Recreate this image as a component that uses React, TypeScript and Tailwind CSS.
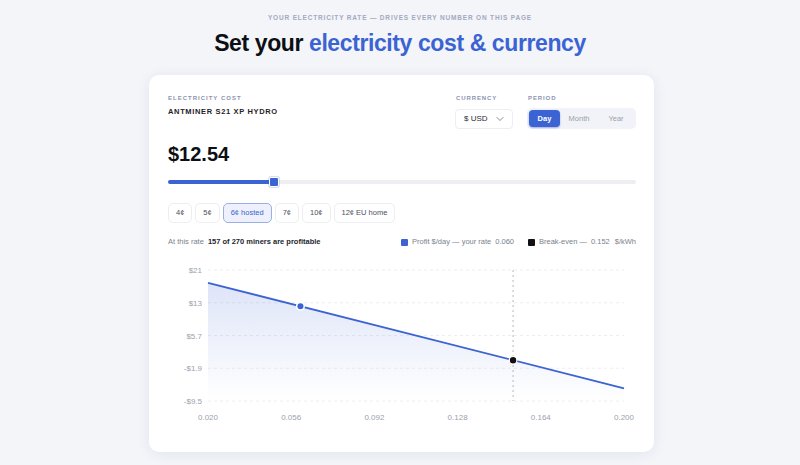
import { ChevronDown } from "lucide-react";

const BLUE = "#3b63d3";

// profit model: 0 at break-even, linear in the rate
const BREAK_EVEN = 0.152;
const SLOPE = 136.4;
const RATE = 0.06;

const X0 = 40;
const X1 = 456;
const R0 = 0.02;
const R1 = 0.2;
const Y_TOP = 12;
const Y_BOT = 143;
const V_TOP = 21;
const V_BOT = -9.5;

const xOf = (r: number) => X0 + ((r - R0) / (R1 - R0)) * (X1 - X0);
const profit = (r: number) => SLOPE * (BREAK_EVEN - r);
const yOf = (v: number) => Y_TOP + ((V_TOP - v) / (V_TOP - V_BOT)) * (Y_BOT - Y_TOP);

const Y_TICKS = ["$21", "$13", "$5.7", "-$1.9", "-$9.5"];
const X_TICKS = ["0.020", "0.056", "0.092", "0.128", "0.164", "0.200"];

const CHIPS = [
  { label: "4¢", active: false },
  { label: "5¢", active: false },
  { label: "6¢ hosted", active: true },
  { label: "7¢", active: false },
  { label: "10¢", active: false },
  { label: "12¢ EU home", active: false },
];

function ProfitChart() {
  const ax = xOf(R0);
  const ay = yOf(profit(R0));
  const bx = xOf(R1);
  const by = yOf(profit(R1));
  const beX = xOf(BREAK_EVEN);
  const beY = yOf(0);
  const curX = xOf(RATE);
  const curY = yOf(profit(RATE));

  return (
    <svg width={468} height={166} viewBox="0 0 468 166" className="block">
      <defs>
        <linearGradient id="area" x1="0" y1="0" x2="0" y2="1">
          <stop offset="0%" stopColor={BLUE} stopOpacity={0.17} />
          <stop offset="100%" stopColor={BLUE} stopOpacity={0} />
        </linearGradient>
      </defs>
      {Y_TICKS.map((t, i) => {
        const y = Y_TOP + (i * (Y_BOT - Y_TOP)) / 4;
        return (
          <g key={t}>
            <line x1={X0} x2={X1} y1={y} y2={y} stroke="#eceef3" strokeDasharray="3 3" />
            <text x={34} y={y + 3} textAnchor="end" fontSize={8} fill="#9ca1ae">
              {t}
            </text>
          </g>
        );
      })}
      <polygon points={`${ax},${ay} ${bx},${by} ${bx},${Y_BOT} ${ax},${Y_BOT}`} fill="url(#area)" />
      <line x1={beX} x2={beX} y1={Y_TOP} y2={Y_BOT} stroke="#b4b8c2" strokeDasharray="2 3" />
      <line x1={ax} y1={ay} x2={bx} y2={by} stroke={BLUE} strokeWidth={1.8} />
      <circle cx={curX} cy={curY} r={3.8} fill={BLUE} stroke="#fff" strokeWidth={1.5} />
      <circle cx={beX} cy={beY} r={3.8} fill="#111" stroke="#fff" strokeWidth={1.2} />
      {X_TICKS.map((t, i) => (
        <text
          key={t}
          x={X0 + (i * (X1 - X0)) / 5}
          y={162}
          textAnchor="middle"
          fontSize={8}
          fill="#9ca1ae"
        >
          {t}
        </text>
      ))}
    </svg>
  );
}

export default function App() {
  return (
    <div className="flex h-[465px] w-full flex-col items-center bg-[#f3f5f9] font-['Liberation_Sans',Arial,sans-serif]">
      <p className="pt-[14px] text-[6.5px] leading-[8px] font-bold tracking-[0.82px] text-[#a3a9c2]">
        YOUR ELECTRICITY RATE — DRIVES EVERY NUMBER ON THIS PAGE
      </p>
      <h1 className="mt-[7px] text-[23px] leading-[28px] font-bold tracking-[-0.4px] text-[#0d0f14]">
        Set your <span className="text-[#3b63d3]">electricity cost &amp; currency</span>
      </h1>

      <div className="mt-[18px] ml-[3px] h-[377px] w-[505px] rounded-[10px] bg-white pt-[19px] pr-[18px] pl-[19px] shadow-[0_2px_14px_rgba(30,40,80,0.08)]">
        {/* header */}
        <div className="flex items-start justify-between">
          <div>
            <div className="text-[6px] leading-[8px] font-bold tracking-[1px] text-[#8c93b0]">
              ELECTRICITY COST
            </div>
            <div className="mt-[5px] text-[7.5px] leading-[10px] font-bold tracking-[0.65px] text-[#1f2229]">
              ANTMINER S21 XP HYDRO
            </div>
          </div>
          <div className="flex gap-[14px]">
            <div>
              <div className="pl-px text-[6px] leading-[8px] font-bold tracking-[0.9px] text-[#8c93b0]">
                CURRENCY
              </div>
              <div className="mt-[7px] flex h-[20px] w-[58px] items-center justify-between rounded-[4px] border border-[#eceef2] pr-[6px] pl-[8px] text-[8px] text-[#2a2d35]">
                <span>$ USD</span>
                <ChevronDown size={12} strokeWidth={1.4} className="text-[#555a66]" />
              </div>
            </div>
            <div>
              <div className="pl-px text-[6px] leading-[8px] font-bold tracking-[0.9px] text-[#8c93b0]">
                PERIOD
              </div>
              <div className="mt-[6px] flex h-[21px] w-[109px] items-center rounded-[5px] bg-[#f1f3f8] px-[2px] text-[7.5px] text-[#9a9fab]">
                <div className="flex h-[17px] w-[31px] items-center justify-center rounded-[4px] bg-[#3b63d3] font-bold text-white shadow-[0_1px_2px_rgba(40,70,180,0.4)]">
                  Day
                </div>
                <div className="flex w-[38px] justify-center">Month</div>
                <div className="flex w-[36px] justify-center">Year</div>
              </div>
            </div>
          </div>
        </div>

        {/* price */}
        <div className="mt-[13px] text-[20px] leading-[24px] font-bold text-[#0d0f14]">$12.54</div>

        {/* slider */}
        <div className="relative mt-[11px] flex h-[10px] items-center">
          <div className="h-[4px] w-full rounded-full bg-[#eceef2]">
            <div className="h-full w-[23%] rounded-full bg-[#3b63d3]" />
          </div>
          <div className="absolute top-0 left-[101px] h-[10px] w-[10px] rounded-[2px] border-[1.5px] border-white bg-[#3b63d3] shadow-[0_0_0_1px_rgba(59,99,211,0.2)]" />
        </div>

        {/* presets */}
        <div className="mt-[16px] flex gap-[3px]">
          {CHIPS.map((c) => (
            <div
              key={c.label}
              className={
                "flex h-[20px] items-center rounded-[5px] border px-[7px] text-[7.5px] " +
                (c.active
                  ? "border-[#9caee6] bg-[#eef1fb] text-[#3b63d3]"
                  : "border-[#eceef2] bg-white text-[#4b505c]")
              }
            >
              {c.label}
            </div>
          ))}
        </div>

        {/* summary + legend */}
        <div className="mt-[14px] flex h-[10px] items-center justify-between text-[7.5px] text-[#7a7f8b]">
          <div>
            At this rate <span className="ml-[2px] font-bold text-[#23262d]">157 of 270 miners are profitable</span>
          </div>
          <div className="flex items-center">
            <span className="mr-[4px] h-[7px] w-[7px] rounded-[1px] bg-[#3b63d3]" />
            <span>Profit $/day — your rate</span>
            <span className="ml-[4px]">0.060</span>
            <span className="mr-[4px] ml-[14px] h-[7px] w-[7px] rounded-[1px] bg-[#111]" />
            <span>Break-even —</span>
            <span className="ml-[4px]">0.152</span>
            <span className="ml-[5px]">$/kWh</span>
          </div>
        </div>

        {/* chart */}
        <div className="mt-[11px]">
          <ProfitChart />
        </div>
      </div>
    </div>
  );
}
